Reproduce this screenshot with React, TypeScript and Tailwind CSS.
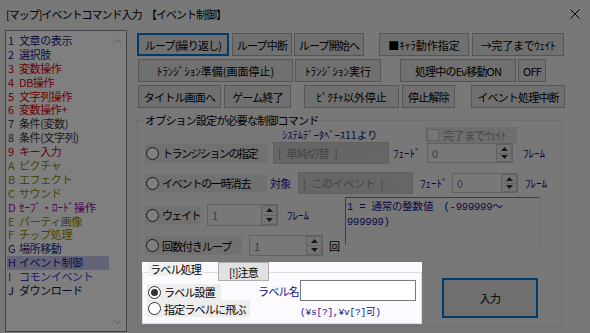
import React from "react";

type BtnProps = { className: string; focus?: boolean; children: React.ReactNode };

function Btn({ className, focus, children }: BtnProps) {
  return (
    <div
      className={
        "flex shrink-0 items-center justify-center whitespace-nowrap bg-[#e1e1e1] text-black " +
        (focus ? "border-2 border-[#0078d7] " : "border border-[#adadad] ") +
        className
      }
    >
      {children}
    </div>
  );
}

function Radio({ checked }: { checked?: boolean }) {
  return (
    <span className="flex h-[13px] w-[13px] shrink-0 items-center justify-center rounded-full border border-[#333333] bg-white">
      {checked && <span className="h-[7px] w-[7px] rounded-full bg-[#333333]" />}
    </span>
  );
}

function RadioBox({
  className,
  label,
  checked,
  textClass,
}: {
  className: string;
  label: string;
  checked?: boolean;
  textClass?: string;
}) {
  return (
    <div className={"flex shrink-0 items-center whitespace-nowrap " + className}>
      <span className="ml-[1px]">
        <Radio checked={checked} />
      </span>
      <span className={"ml-[3px] " + (textClass ?? "")}>{label}</span>
    </div>
  );
}

function Chevron({ up, color }: { up?: boolean; color: string }) {
  return (
    <svg width="9" height="5" viewBox="0 0 9 5">
      <path d={up ? "M0.5 4.5L4.5 0.5L8.5 4.5" : "M0.5 0.5L4.5 4.5L8.5 0.5"} fill="none" stroke={color} strokeWidth="1" />
    </svg>
  );
}

function Spin({ className, value }: { className: string; value: string }) {
  return (
    <div className={"flex shrink-0 border border-[#c4c4c4] bg-[#f0f0f0] " + className}>
      <div className="flex flex-1 items-center pl-[4px] text-[#7a7a7a]">{value}</div>
      <div className="flex w-[16px] flex-col">
        <div className="flex flex-1 items-center justify-center border border-[#c4c4c4] bg-[#e8e8e8]">
          <svg width="7" height="4" viewBox="0 0 7 4">
            <path d="M0 4L3.5 0L7 4Z" fill="#333333" />
          </svg>
        </div>
        <div className="flex flex-1 items-center justify-center border border-t-0 border-[#c4c4c4] bg-[#e8e8e8]">
          <svg width="7" height="4" viewBox="0 0 7 4">
            <path d="M0 0L3.5 4L7 0Z" fill="#333333" />
          </svg>
        </div>
      </div>
    </div>
  );
}

function Combo({ className, text }: { className: string; text: string }) {
  return (
    <div className={"flex shrink-0 items-center border border-[#bfbfbf] bg-[#cccccc] " + className}>
      <span className="whitespace-pre pl-[4px] tracking-[-0.4px] text-[#8a8a8a]">{text}</span>
      <span className="ml-auto mr-[6px] flex">
        <Chevron color="#e8e8e8" />
      </span>
    </div>
  );
}

const items: [string, string, string][] = [
  ["1", "文章の表示", "text-[#1a1a80]"],
  ["2", "選択肢", "text-[#1a1a80]"],
  ["3", "変数操作", "text-[#d40000]"],
  ["4", "DB操作", "text-[#d40000]"],
  ["5", "文字列操作", "text-[#d40000]"],
  ["6", "変数操作+", "text-[#d40000]"],
  ["7", "条件(変数)", "text-[#404040]"],
  ["8", "条件(文字列)", "text-[#404040]"],
  ["9", "キー入力", "text-[#d40000]"],
  ["A", "ピクチャ", "text-[#8a8a00]"],
  ["B", "エフェクト", "text-[#8a8a00]"],
  ["C", "サウンド", "text-[#8a8a00]"],
  ["D", "ｾｰﾌﾞ・ﾛｰﾄﾞ操作", "text-[#a000a0] tracking-[0px]"],
  ["E", "パーティ画像", "text-[#8a8a00]"],
  ["F", "チップ処理", "text-[#8a8a00]"],
  ["G", "場所移動", "text-[#1a1a80]"],
  ["H", "イベント制御", "text-[#1a1a80] bg-[#c8c8f0]"],
  ["I", "コモンイベント", "text-[#3a3ad0]"],
  ["J", "ダウンロード", "text-[#101040]"],
];

export default function App() {
  return (
    <div className="relative h-[333px] w-[590px] overflow-hidden bg-[#f0f0f0] font-['Noto_Sans_CJK_JP','Noto_Sans',sans-serif] text-[11px] leading-[14px] tracking-[-0.8px] text-black">
      {/* title bar */}
      <div className="flex h-[28px] items-center pl-[6px] pr-[10px]">
        <span className="w-[135px] whitespace-nowrap tracking-[-1px]">[マップ]イベントコマンド入力</span>
        <span className="ml-[5px] whitespace-nowrap tracking-[-1px]">【イベント制御】</span>
        <span className="ml-auto flex">
          <svg width="10" height="10" viewBox="0 0 10 10">
            <path d="M0.5 0.5L9.5 9.5M9.5 0.5L0.5 9.5" stroke="#000" strokeWidth="1" fill="none" />
          </svg>
        </span>
      </div>

      <div className="flex pl-[5px]">
        {/* command list */}
        <div className="mt-[2px] flex h-[302px] w-[122px] shrink-0 border border-[#828790] bg-white">
          <div className="w-[103px] pl-[1px] pt-[3px] tracking-[-0.4px]">
            {items.map(([n, t, c], i) => (
              <div key={i} className={"flex h-[13.9px] whitespace-nowrap pl-[1px] leading-[13.9px] " + c}>
                <span className="w-[11px] shrink-0">{n}</span>
                <span>{t}</span>
              </div>
            ))}
          </div>
          <div className="flex w-[17px] flex-col items-center justify-between pb-[7px] pt-[8px]">
            <Chevron up color="#bfbfbf" />
            <Chevron color="#bfbfbf" />
          </div>
        </div>

        {/* right area */}
        <div className="ml-[10px] flex flex-col">
          <div className="mt-[5px] flex h-[23px]">
            <Btn focus className="w-[92px]">ループ(繰り返し)</Btn>
            <Btn className="ml-[3px] w-[60px]">ループ中断</Btn>
            <Btn className="ml-[2px] w-[70px]">ループ開始へ</Btn>
            <Btn className="ml-[15px] w-[90px] tracking-[0px]">■ｷｬﾗ動作指定</Btn>
            <Btn className="ml-[3px] w-[92px] tracking-[-0.3px]">→完了までｳｪｲﾄ</Btn>
          </div>
          <div className="mt-[3px] flex h-[23px] pl-[1px]">
            <Btn className="w-[155px] tracking-[0px]">ﾄﾗﾝｼﾞｼｮﾝ準備(画面停止)</Btn>
            <Btn className="ml-[2px] w-[86px] tracking-[0px]">ﾄﾗﾝｼﾞｼｮﾝ実行</Btn>
            <Btn className="ml-[19px] w-[116px]">処理中のEv移動ON</Btn>
            <Btn className="ml-[2px] w-[28px]">OFF</Btn>
          </div>
          <div className="mt-[3px] flex h-[23px] pl-[1px]">
            <Btn className="w-[83px]">タイトル画面へ</Btn>
            <Btn className="ml-[3px] w-[67px]">ゲーム終了</Btn>
            <Btn className="ml-[13px] w-[95px] tracking-[-0.2px]">ﾋﾟｸﾁｬ以外停止</Btn>
            <Btn className="ml-[3px] w-[53px]">停止解除</Btn>
            <Btn className="ml-[16px] w-[94px]">イベント処理中断</Btn>
          </div>

          {/* option group */}
          <fieldset className="mt-[5px] w-[425px] border border-[#dcdcdc] pb-[2px]">
            <legend className="ml-[7px] whitespace-nowrap">オプション設定が必要な制御コマンド</legend>

            <div className="flex h-[15px] items-start">
              <span className="ml-[144px] w-[143px] whitespace-nowrap text-[10.5px] leading-[15px] tracking-[0px] text-[#10108a]">
                ｼｽﾃﾑﾃﾞｰﾀﾍﾞｰｽ11より
              </span>
              <div className="flex h-[16px] w-[92px] shrink-0 items-center bg-[#dcdcdc]">
                <span className="ml-[2px] h-[12px] w-[12px] border border-[#bcbcbc] bg-[#f0f0f0]" />
                <span className="ml-[4px] whitespace-nowrap tracking-[-0.4px] text-[#8d8d8d]">完了までｳｪｲﾄ</span>
              </div>
            </div>

            <div className="flex h-[22px] items-center">
              <RadioBox
                className="ml-[7px] h-[19px] w-[123px] bg-[#e3e3e3]"
                label="トランジションの指定"
                textClass="tracking-[-1.5px]"
              />
              <Combo className="ml-[5px] h-[22px] w-[116px]" text={"[\u2002単純切替\u2002]"} />
              <span className="ml-[4px] w-[34px] whitespace-nowrap tracking-[0px] text-[#10108a]">ﾌｪｰﾄﾞ</span>
              <Spin className="h-[20px] w-[86px]" value="0" />
              <span className="ml-[10px] whitespace-nowrap tracking-[0px] text-[#10108a]">ﾌﾚｰﾑ</span>
            </div>

            <div className="mt-[8px] flex h-[22px] items-center">
              <RadioBox
                className="ml-[7px] h-[18px] w-[122px] bg-[#e3e3e3]"
                label="イベントの一時消去"
                textClass="tracking-[-1.2px]"
              />
              <span className="ml-[3px] w-[28px] whitespace-nowrap text-[#10108a]">対象</span>
              <Combo className="h-[22px] w-[115px]" text={"[\u2002このイベント\u2002]"} />
              <span className="ml-[7px] w-[32px] whitespace-nowrap tracking-[0px] text-[#10108a]">ﾌｪｰﾄﾞ</span>
              <Spin className="h-[20px] w-[66px]" value="0" />
              <span className="ml-[7px] whitespace-nowrap tracking-[0px] text-[#10108a]">ﾌﾚｰﾑ</span>
            </div>

            <div className="mt-[3px] flex">
              <div className="flex w-[207px] flex-col pt-[7px]">
                <div className="flex h-[22px] items-center">
                  <RadioBox
                    className="ml-[7px] h-[18px] w-[55px] bg-[#e3e3e3]"
                    label="ウェイト"
                    textClass="tracking-[-1.5px]"
                  />
                  <Spin className="ml-[7px] h-[22px] w-[71px]" value="1" />
                  <span className="ml-[9px] whitespace-nowrap tracking-[0px] text-[#10108a]">ﾌﾚｰﾑ</span>
                </div>
                <div className="mt-[9px] flex h-[21px] items-center">
                  <RadioBox
                    className="ml-[7px] h-[19px] w-[97px] bg-[#e3e3e3]"
                    label="回数付きループ"
                    textClass="tracking-[-1px]"
                  />
                  <Spin className="ml-[7px] h-[21px] w-[74px]" value="1" />
                  <span className="ml-[6px]">回</span>
                </div>
              </div>
              <div className="h-[48px] w-[195px] border border-b-[#e8e8e8] border-l-[#7c7c7c] border-r-[#e8e8e8] border-t-[#7c7c7c] pl-[1px] pt-[2px] font-['Liberation_Mono','Noto_Sans_CJK_JP',monospace] text-[10.5px] leading-[15px] tracking-[-0.2px] text-[#10108a]">
                <div className="whitespace-pre">1 = 通常の整数値　(-999999～</div>
                <div>999999)</div>
              </div>
            </div>

            <div className="mt-[6px] flex items-start">
              <div className="relative z-20 ml-[4px] h-[62px] w-[280px] bg-[#fbfbff]">
                <fieldset className="h-[62px] w-[280px] border border-[#dcdcdc]">
                  <legend className="ml-[5px] h-[20px]">
                    <span className="block h-[14px] bg-[#f0f0f0] px-[2px] leading-[14px]">ラベル処理</span>
                  </legend>
                  <div className="flex">
                    <div className="ml-[4px] flex w-[103px] flex-col">
                      <RadioBox className="mt-[2px] h-[16px] w-[74px] bg-[#ededed]" label="ラベル設置" checked />
                      <RadioBox className="h-[17px] w-[103px] bg-[#ededed]" label="指定ラベルに飛ぶ" />
                    </div>
                    <div className="ml-[7px] flex flex-col">
                      <div className="-mt-[2px] flex items-center">
                        <span className="w-[43px] whitespace-nowrap pl-[1px] text-[#10108a]">ラベル名</span>
                        <div className="h-[21px] w-[116px] border border-[#7a7a7a] bg-white" />
                      </div>
                      <div className="ml-[43px] mt-[5px] whitespace-nowrap font-['Liberation_Mono','Noto_Sans_CJK_JP',monospace] text-[9.5px] tracking-[-0.2px] text-[#10108a]">
                        (¥s[?],¥v[?]可)
                      </div>
                    </div>
                  </div>
                </fieldset>
                <div className="absolute left-[76px] top-0 flex h-[19px] w-[51px] items-center justify-center border border-[#adadad] bg-[#e1e1e1]">
                  [!]注意
                </div>
              </div>
              <Btn focus className="ml-[20px] mt-[16px] h-[40px] w-[96px]">入力</Btn>
            </div>
          </fieldset>
        </div>
      </div>

      <div className="absolute inset-0 z-10 bg-black/50" />
    </div>
  );
}
